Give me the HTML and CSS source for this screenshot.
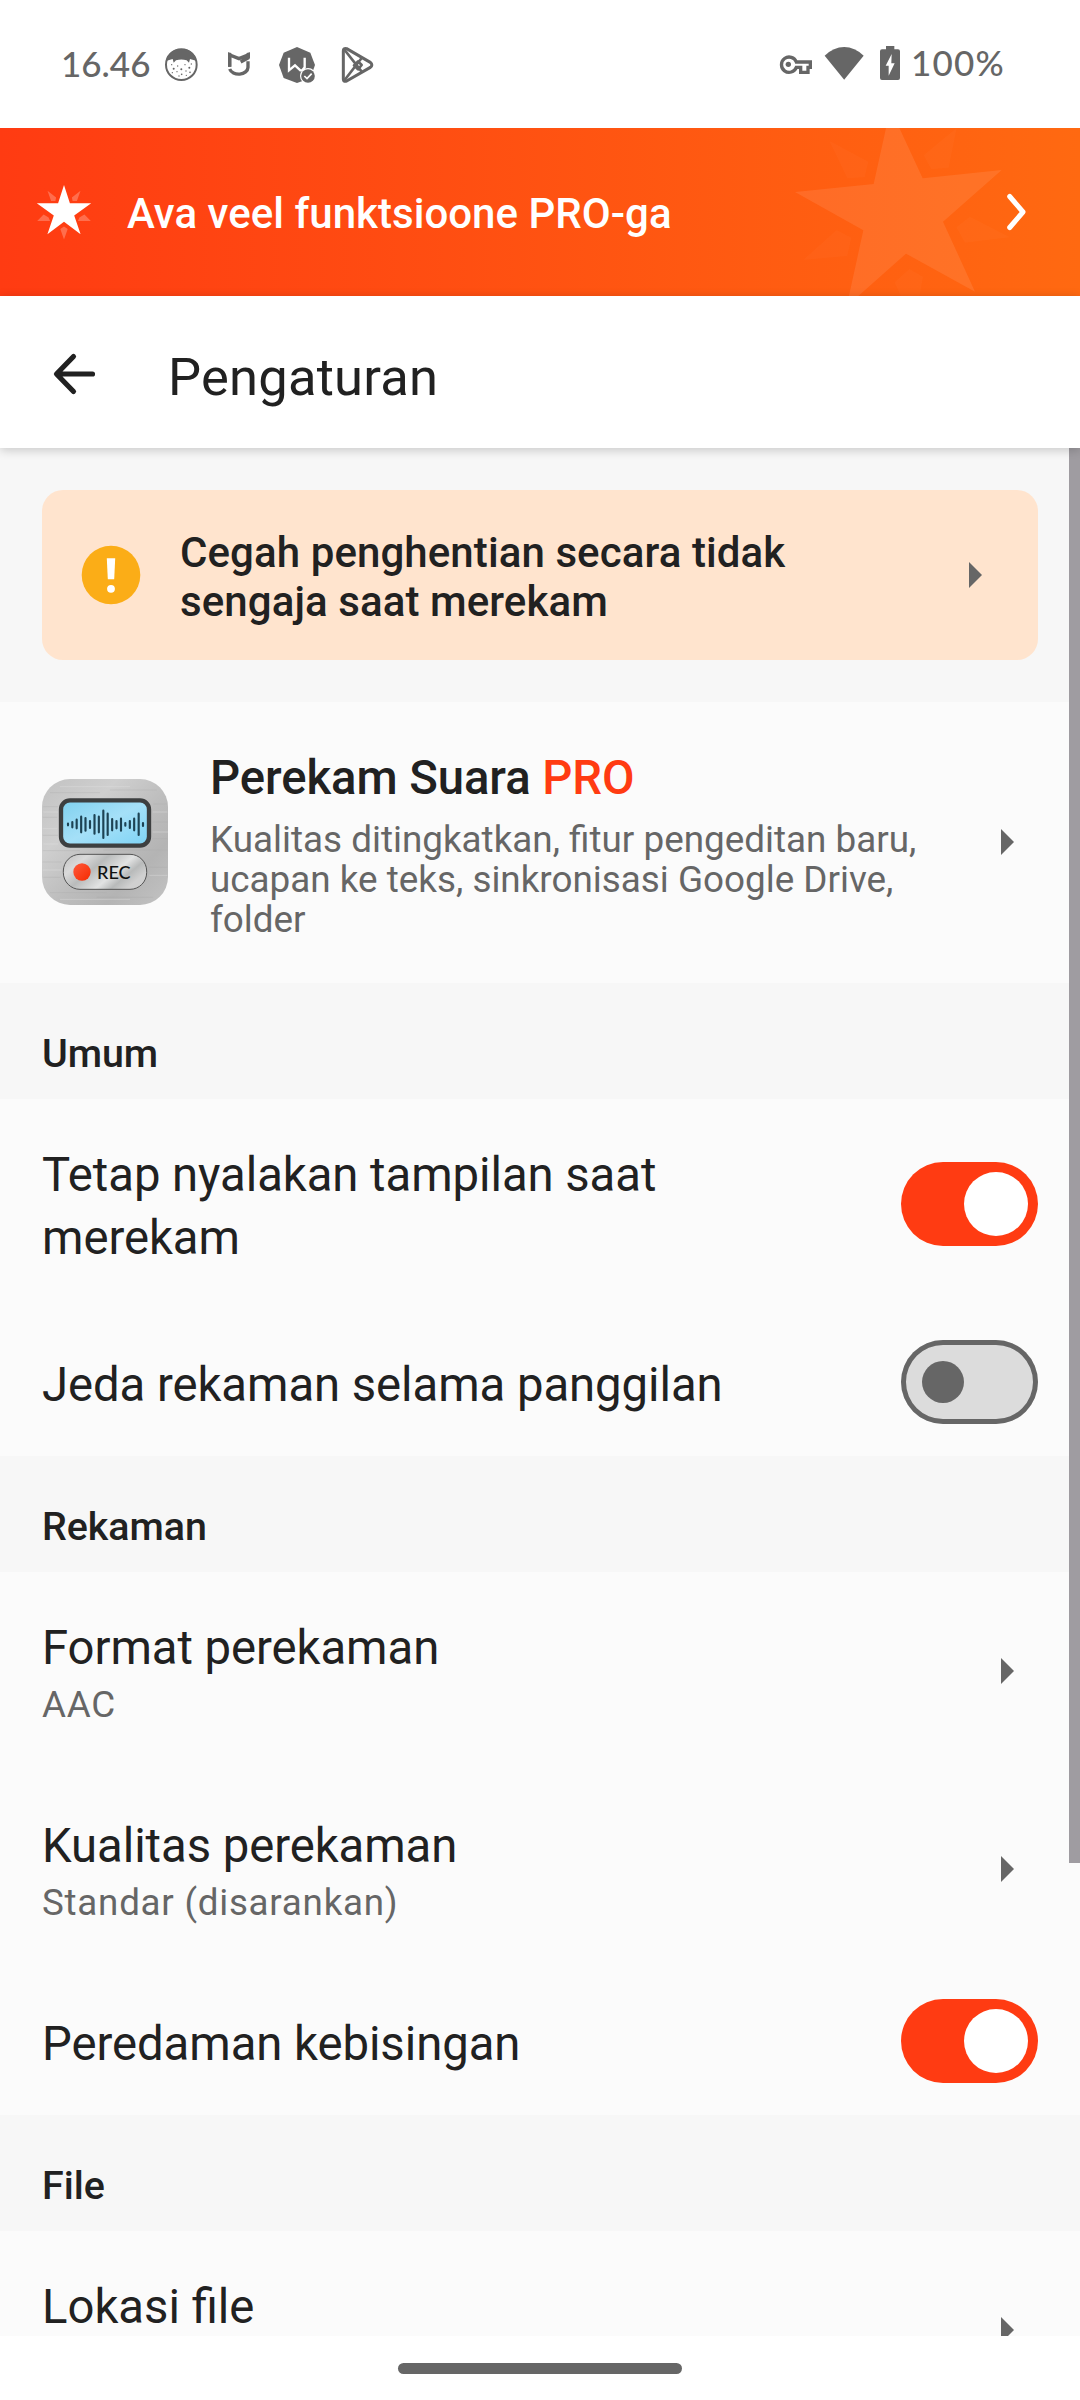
FILE: index.html
```html
<!DOCTYPE html>
<html lang="id">
<head>
<meta charset="utf-8">
<title>Pengaturan</title>
<link rel="stylesheet" href="styles.css">
</head>
<body>
<div class="screen">
  <header class="status">
    <div class="status-strip">
      <span class="clock">16.46</span>
      <svg class="s-face" width="36" height="90" viewBox="489 0 108 270">
        <circle cx="544" cy="134" r="46" fill="#fff" stroke="#666" stroke-width="6"/>
        <path d="M500 122Q506 88 544 87T588 122L570 117 567 128 560 121Q544 116 528 121L521 128 518 117Z" fill="#666"/>
        <g fill="#666"><circle cx="515" cy="134" r="2"/><circle cx="521" cy="146" r="3"/><circle cx="517" cy="158" r="2"/><circle cx="533" cy="138" r="2"/><circle cx="531" cy="155" r="2"/><circle cx="544" cy="148" r="3"/><circle cx="545" cy="163" r="2.5"/><circle cx="537" cy="168" r="2"/><circle cx="555" cy="134" r="2"/><circle cx="558" cy="153" r="2"/><circle cx="568" cy="143" r="3"/><circle cx="574" cy="132" r="2"/><circle cx="570" cy="157" r="2.5"/><circle cx="559" cy="166" r="2"/></g>
      </svg>
      <svg class="s-mi" width="26" height="90" viewBox="678 0 78 270" fill="none" stroke="#666" stroke-width="10">
        <path d="M689 140V105L717 116 744 105V114L722 126"/>
        <path d="M689 147A28 21 0 0 0 744 142V124"/>
        <path d="M684 97l10 2v41h-10zM740 99l10-2v16l-10 6z" fill="#666" stroke="none"/>
      </svg>
      <svg class="s-w" width="38" height="90" viewBox="834 0 114 270">
        <path d="M891 81l40 17 14 37-14 40-40 14-40-15-14-39 14-37z" fill="#666"/>
        <path d="M867 113v38l18-15 16 15h6l7-9V113" fill="none" stroke="#fff" stroke-width="7"/>
        <circle cx="924" cy="168" r="24" fill="#fff"/>
        <circle cx="924" cy="168" r="20.500" fill="#666"/>
        <path d="M913 168l8 8 14-15" fill="none" stroke="#fff" stroke-width="5"/>
      </svg>
      <svg class="s-play" width="36" height="90" viewBox="1020 0 108 270" fill="none" stroke="#666" stroke-width="9" stroke-linejoin="round">
        <path d="M1030 92Q1030 83 1040 86L1111 127Q1120 135 1111 142L1040 183Q1030 186 1030 178Z"/>
        <path d="M1034 90L1085 155M1034 180L1085 114M1062 136L1074 124 1085 135 1074 148Z" stroke-width="8"/>
      </svg>
      <span class="spacer"></span>
      <svg class="s-key" width="36" height="90" viewBox="114 0 108 270">
        <path d="M169 126A23 23 0 1 0 169 142H182V157H204V142H211V126Z" fill="none" stroke="#666" stroke-width="10"/>
        <circle cx="145" cy="133" r="8" fill="#666"/>
      </svg>
      <svg class="s-wifi" width="40" height="90" viewBox="253 0 120 270"><path d="M255 107Q282 81 313.500 81T372 107L313.500 179Z" fill="#666"/></svg>
      <svg class="s-bat" width="22" height="90" viewBox="417 0 66 270">
        <path d="M438 78h25v10h11q6 0 6 6v80q0 6-6 6h-48q-6 0-6-6V94q0-6 6-6h12z" fill="#666"/>
        <path d="M455 102L437 137H446V167L464 130H454Z" fill="#fff"/>
      </svg>
      <span class="percent">100%</span>
    </div>
  </header>

  <section class="banner">
    <svg class="banner-art" width="340" height="168" viewBox="0 24 1020 504" fill="#fff">
      <path fill-opacity=".09" d="M451-34.500L548 175 785 150 609 305 705 515 498 401 320 559 370 331 165 216 401 192Z"/>
      <path fill-opacity=".025" d="M268 62L385 125 374 172 322 175ZM650 24L551 106 574 148 626 143ZM690 290L810 352 675 368 649 322ZM190 420L290 330 334 353 322 408ZM508 447L549 470 539 528H482L464 487Z"/>
    </svg>
    <svg class="banner-star" width="56" height="56" viewBox="35.400 184 56 56" fill="#fff">
      <path d="M63.400 185L69.300 203.300H90.600L73.600 215.500 80 234.200 63.400 221.700 46.800 234.200 53.200 215.500 36.200 203.300H57.500Z"/>
      <path fill-opacity=".25" d="M46.900 190.700L55.500 197.500 54.800 201H50.500ZM79.900 190.700L71.300 197.500 72 201H76.300ZM36.600 221L43 214.500 48 217.500 49.500 221ZM90.200 221L83.800 214.500 78.800 217.500 77.300 221ZM63.400 239.500L59.700 229 63.400 226.500 67.100 229Z"/>
    </svg>
    <span class="banner-text">Ava veel funktsioone PRO-ga</span>
    <svg class="banner-chevron" width="24" height="40" viewBox="0 0 24 40" fill="none" stroke="#fff" stroke-width="5" stroke-linecap="round" stroke-linejoin="round"><path d="M5.700 4.500L19 20 5.700 35.500"/></svg>
  </section>

  <nav class="toolbar">
    <svg width="46" height="46" viewBox="51 351 46 46" fill="none" stroke="#212121" stroke-width="5.200" stroke-linecap="round" stroke-linejoin="round"><path d="M92.500 374H57M73.500 356.500L56.500 374 73.500 391.500"/></svg>
    <h1>Pengaturan</h1>
  </nav>

  <main class="content">
    <div class="notice-wrap">
      <div class="notice">
        <svg width="60" height="60" viewBox="0 0 60 60"><circle cx="30" cy="30" r="29.300" fill="#fbad17"/><path d="M25.800 13.300h8.400l-1 21h-6.400z" fill="#fff"/><circle cx="30" cy="43.800" r="3.900" fill="#fff"/></svg>
        <p>Cegah penghentian secara tidak sengaja saat merekam</p>
        <svg class="arrow" width="13" height="26" viewBox="0 0 13 26"><path d="M0 0L13 13 0 26Z" fill="#666"/></svg>
      </div>
    </div>

    <div class="promo">
      <svg class="app-icon" width="126" height="126" viewBox="36 57 378 378">
        <defs>
          <linearGradient id="metal" x1="0" y1="0" x2="1" y2="1"><stop offset="0" stop-color="#c2c2c2"/><stop offset=".3" stop-color="#cfcfcf"/><stop offset=".55" stop-color="#bdbdbd"/><stop offset=".75" stop-color="#b4b4b4"/><stop offset="1" stop-color="#c3c3c3"/></linearGradient>
          <linearGradient id="lcd" x1="0" y1="0" x2="1" y2="1"><stop offset="0" stop-color="#7fd0ee"/><stop offset=".5" stop-color="#a5e0f8"/><stop offset="1" stop-color="#7dd3f5"/></linearGradient>
          <linearGradient id="pill" x1="0" y1="0" x2="1" y2=".5"><stop offset="0" stop-color="#c0c0c0"/><stop offset=".25" stop-color="#dadada"/><stop offset=".45" stop-color="#b9bbbb"/><stop offset=".7" stop-color="#e2e3e3"/><stop offset=".85" stop-color="#b8baba"/><stop offset="1" stop-color="#d0d0d0"/></linearGradient>
          <linearGradient id="dot" x1="0" y1="0" x2="1" y2="1"><stop offset="0" stop-color="#ff5a3c"/><stop offset="1" stop-color="#f52a00"/></linearGradient>
        </defs>
        <rect x="36" y="57" width="378" height="378" rx="84" fill="url(#metal)"/>
        <path d="M60 98H210M240 90H380M40 140H84M370 132H412M38 172H82M368 186H414M38 226H84M366 236H412M38 272H150M220 270H412M38 306H94M356 322H412M40 352H92M60 398H230M200 412H370" stroke="#a8a8a8" stroke-opacity=".45" stroke-width="2"/>
        <path d="M90 80H300M40 156H84M368 156H412M38 206H82M368 216H414M40 252H84M38 330H94M358 346H412M90 418H300" stroke="#e2e2e2" stroke-opacity=".6" stroke-width="2"/>
        <rect x="93" y="121" width="264" height="136" rx="27" fill="url(#lcd)" stroke="#3d3f40" stroke-width="13"/>
        <path d="M114 191v5M127 186v16M140 179v26M153.500 170v47M166.500 174v38M180 183v21M193.500 165v56M206.500 170v47M220 152v82M233 161v64M246.500 177v34M259.500 183v22M273 176v36M286 189v8M299.500 183v21M312.500 176v35M326 161v64M339 189v9" fill="none" stroke="#1d4354" stroke-width="6.500" stroke-linecap="round"/>
        <rect x="100" y="283" width="250" height="105" rx="50" fill="url(#pill)" stroke="#555" stroke-width="3"/>
        <circle cx="156" cy="336" r="26" fill="url(#dot)"/>
        <text x="201" y="357" class="rec" textLength="101" lengthAdjust="spacingAndGlyphs">REC</text>
      </svg>
      <div class="promo-text">
        <h2>Perekam Suara <span class="pro">PRO</span></h2>
        <p>Kualitas ditingkatkan, fitur pengeditan baru, ucapan ke teks, sinkronisasi Google Drive, folder</p>
      </div>
      <svg class="arrow" width="13" height="26" viewBox="0 0 13 26"><path d="M0 0L13 13 0 26Z" fill="#666"/></svg>
    </div>

    <h3 class="section">Umum</h3>
    <div class="row row-tall">
      <div class="label">Tetap nyalakan tampilan saat merekam</div>
      <span class="switch on"><i></i></span>
    </div>
    <div class="row">
      <div class="label">Jeda rekaman selama panggilan</div>
      <span class="switch"><i></i></span>
    </div>

    <h3 class="section">Rekaman</h3>
    <div class="row row-sub">
      <div class="label">Format perekaman<small>AAC</small></div>
      <svg class="arrow" width="13" height="26" viewBox="0 0 13 26"><path d="M0 0L13 13 0 26Z" fill="#666"/></svg>
    </div>
    <div class="row row-sub">
      <div class="label">Kualitas perekaman<small>Standar (disarankan)</small></div>
      <svg class="arrow" width="13" height="26" viewBox="0 0 13 26"><path d="M0 0L13 13 0 26Z" fill="#666"/></svg>
    </div>
    <div class="row">
      <div class="label">Peredaman kebisingan</div>
      <span class="switch on"><i></i></span>
    </div>

    <h3 class="section">File</h3>
    <div class="row row-sub row-clipped">
      <div class="label">Lokasi file</div>
      <svg class="arrow" width="13" height="26" viewBox="0 0 13 26"><path d="M0 0L13 13 0 26Z" fill="#666"/></svg>
    </div>
    <div class="scrollbar"></div>
  </main>

  <footer class="gesture"><span></span></footer>
</div>
</body>
</html>
```
FILE: styles.css
```css
* { box-sizing: border-box; margin: 0; padding: 0; }
body { background: #fff; font-family: Roboto, sans-serif; color: #212121; }
svg { display: block; flex: none; }

.screen { width: 1080px; height: 2400px; display: flex; flex-direction: column; overflow: hidden; background: #fff; }

.status { height: 128px; padding: 20px 0 0 61px; flex: none; }
.status-strip { display: flex; height: 90px; font: 500 35px/87px Lato, sans-serif; color: #666; }
.clock { width: 102px; }
.s-mi { margin-left: 27px; }
.s-w { margin-left: 26px; }
.s-play { margin-left: 24px; }
.spacer { flex: 1; }
.s-wifi { margin-left: 10px; }
.s-bat { margin-left: 15px; }
.percent { width: 179px; padding-left: 10px; line-height: 85px; letter-spacing: 1.2px; }

.banner { position: relative; flex: none; height: 168px; display: flex; align-items: center; padding: 0 52px 0 36px; background: linear-gradient(90deg, #ff3b12, #ff6911); color: #fff; overflow: hidden; }
.banner-art { position: absolute; right: 0; top: 0; }
.banner-text { flex: 1; margin-left: 35px; padding-top: 3px; font-size: 42px; font-weight: 500; letter-spacing: .03px; }
.banner-chevron { margin: -1px 0 0; }

.toolbar { position: relative; z-index: 1; flex: none; height: 152px; display: flex; align-items: center; padding-left: 51px; padding-top: 4px; background: #fff; box-shadow: 0 2px 10px rgba(0, 0, 0, .2); }
.toolbar h1 { margin-left: 71px; padding-top: 6px; font-size: 52.5px; font-weight: 400; letter-spacing: .2px; }

.content { position: relative; flex: none; height: 1888px; overflow: hidden; background: #fbfbfb; }
.scrollbar { position: absolute; top: 0; right: 0; width: 11px; height: 1415px; background: #9f9ca1; }

.notice-wrap { padding: 42px; height: 254px; background: #f7f7f7; }
.notice { height: 170px; display: flex; align-items: center; padding: 0 56px 0 39px; border-radius: 21px; background: #ffe4ce; }
.notice p { width: 660px; margin: 0 auto 0 39px; padding-top: 4px; font-size: 42px; line-height: 49px; font-weight: 500; letter-spacing: .09px; }

.promo { height: 281px; display: flex; align-items: center; padding: 0 66px 0 42px; }
.app-icon { margin-bottom: 1px; }
.promo-text { width: 730px; margin: 0 auto 0 42px; padding-top: 5px; }
.promo h2 { font-size: 47.25px; line-height: 56px; font-weight: 500; letter-spacing: -.07px; }
.pro { color: #ff3b12; }
.promo p { margin-top: 14px; font-size: 36.85px; line-height: 40px; color: #666; }
.rec { font: 500 54px Lato, sans-serif; fill: #111; }

.section { height: 116px; padding: 48px 42px 0; background: #f7f7f7; font-size: 39.4px; line-height: 46px; font-weight: 500; letter-spacing: -.05px; }

.row { height: 147px; display: flex; align-items: center; justify-content: space-between; padding: 0 42px; }
.row-tall { height: 210px; }
.row-sub { height: 198px; padding-right: 66px; }
.label { max-width: 760px; padding-top: 5px; font-size: 47.25px; line-height: 63px; letter-spacing: -.05px; }
.row-tall .label { max-width: 700px; padding-top: 6px; }
.row-sub .label { padding-top: 4px; }
.label small { display: block; font-size: 36.75px; line-height: 50px; letter-spacing: .75px; color: #666; }
.row-sub.row-clipped .label { align-self: flex-start; padding-top: 45px; letter-spacing: 0; }
.arrow { margin-bottom: 1px; }

.switch { width: 137px; height: 84px; padding: 0 21px; margin-bottom: 1px; border-radius: 42px; display: flex; align-items: center; background: #dcdcdc; box-shadow: inset 0 0 0 5px #666; }
.switch i { width: 42px; height: 42px; border-radius: 50%; background: #666; }
.switch.on { padding: 0 10px; justify-content: flex-end; background: #ff3b12; box-shadow: none; }
.switch.on i { width: 64px; height: 64px; background: #fff; }
.row-tall .switch { margin-bottom: 0; }

.gesture { flex: 1; display: flex; justify-content: center; padding-top: 27px; }
.gesture span { width: 284px; height: 11px; border-radius: 6px; background: #666; }
```
